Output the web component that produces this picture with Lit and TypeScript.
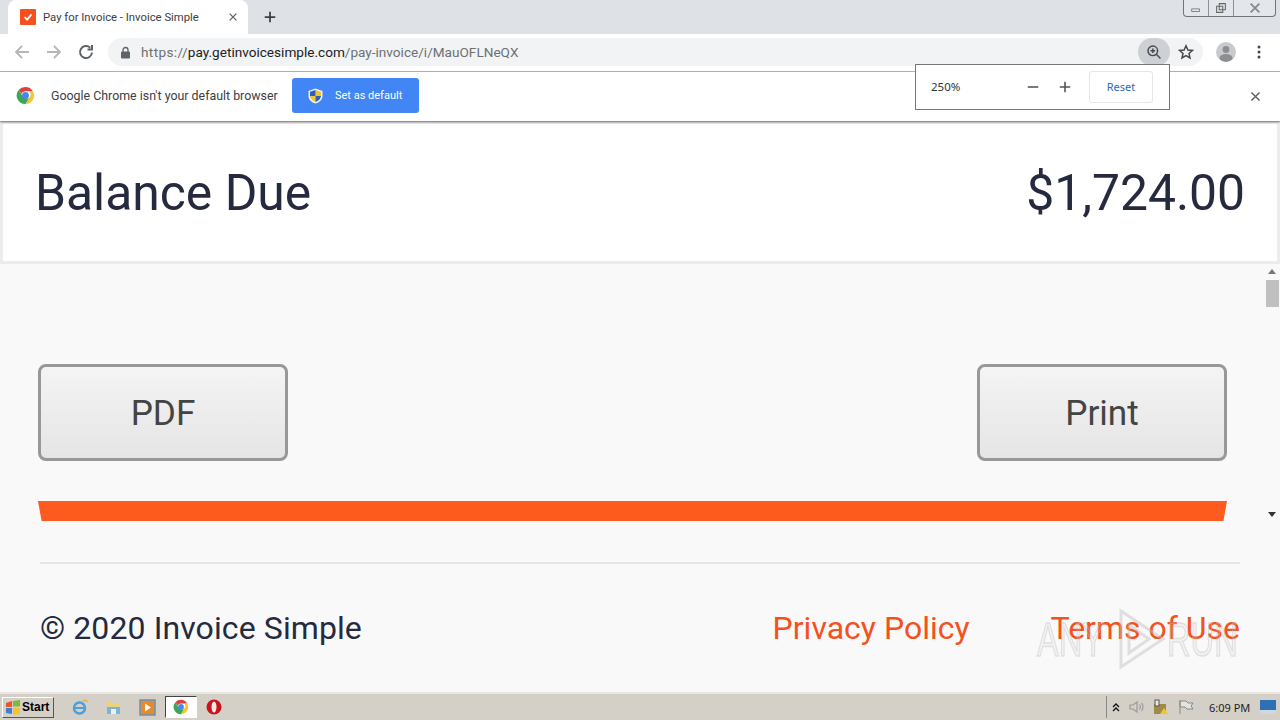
import { LitElement, html, css, svg } from "lit";
import { customElement } from "lit/decorators.js";

const chrome = (s: number) => html`<svg width=${s} height=${s} viewBox="0 0 20 20">
  <path d="M10 1a9 9 0 0 1 7.800 4.500H10a4.500 4.500 0 0 0-4.200 3L3 4A9 9 0 0 1 10 1z" fill="#e0403a"/>
  <path d="M17.800 5.500A9 9 0 0 1 10 19l3.900-6.700a4.500 4.500 0 0 0 0-6.800z" fill="#f7c52e"/>
  <path d="M10 19A9 9 0 0 1 3 4l3.900 6.700A4.500 4.500 0 0 0 13.900 12.300z" fill="#3aa757"/>
  <circle cx="10" cy="10" r="3.600" fill="#4a86e8"/></svg>`;

@customElement("app-root")
export class AppRoot extends LitElement {
  static styles = css`
    :host { display: block; width: 1280px; height: 720px; position: relative; overflow: hidden; font-family: Roboto, sans-serif; background: #f9f9f9; }
    * { box-sizing: border-box; }
    svg { display: block; flex: none; }
    .shell { display: flex; flex-direction: column; height: 720px; }
    .tabstrip { height: 34px; flex: none; background: #dee1e6; display: flex; padding-left: 8px; position: relative; }
    .tab { width: 240px; height: 34px; background: #fff; border-radius: 8px 8px 0 0; display: flex; align-items: center; padding: 0 0 0 12px; font: 11.3px Roboto, sans-serif; color: #3c4043; }
    .favicon { width: 16px; height: 16px; background: #f4511e; border-radius: 1px; display: flex; align-items: center; justify-content: center; margin-right: 7px; }
    .tab-title { flex: 1; white-space: nowrap; }
    .tab-x { margin-right: 9px; }
    .newtab { margin: 10px 0 0 15px; }
    .winctl { position: absolute; right: 4px; top: 0; width: 93px; height: 17px; border: 1px solid #70757c; border-top: none; border-radius: 0 0 4px 4px; background: #e3e6eb; display: flex; }
    .winctl div { display: flex; align-items: center; justify-content: center; border-right: 1px solid #8c9097; }
    .winctl div:last-child { border-right: none; }
    .w1 { width: 25px; } .w2 { width: 25px; } .w3 { flex: 1; }
    .toolbar { height: 38px; flex: none; background: #fff; border-bottom: 1px solid #b5b5b5; display: flex; align-items: center; padding: 0 0 1px 14px; }
    .nav { display: flex; gap: 16px; margin-right: 14px; }
    .omni { width: 1095px; height: 28px; border-radius: 14px; background: #f1f3f4; display: flex; align-items: center; padding-left: 12px; font: 13.6px Roboto, sans-serif; color: #6e7074; position: relative; }
    .omni svg.lock { margin-right: 10px; }
    .omni b { font-weight: 400; color: #202124; }
    .proto { letter-spacing: 0.35px; }
    .zoombtn { position: absolute; right: 33px; top: 0; width: 32px; height: 28px; border-radius: 14px; background: #cdd0d4; display: flex; align-items: center; justify-content: center; }
    .star { position: absolute; right: 2px; top: 0; width: 30px; height: 28px; display: flex; align-items: center; justify-content: center; }
    .tb-right { display: flex; align-items: center; margin-left: 13px; gap: 21px; }
    .avatar { width: 20px; height: 20px; border-radius: 50%; background: #c8cacd; overflow: hidden; }
    .infobar { height: 49px; flex: none; background: #fff; display: flex; align-items: center; padding: 0 0 2px 16px; font: 12.4px Roboto, sans-serif; color: #3c4043; position: relative; box-shadow: 0 1px 2px #666; z-index: 2; }
    .infotext { margin: 0 12px 0 16px; white-space: nowrap; width: 229px; }
    .setdefault { width: 127px; height: 35px; background: #4285f4; border-radius: 3px; color: #fff; display: flex; align-items: center; padding-left: 16px; gap: 12px; font-size: 11px; }
    .info-x { position: absolute; right: 18px; top: 18px; }
    .page { flex: 1; display: flex; flex-direction: column; background: #f9f9f9; }
    .balance { height: 143px; flex: none; background: #fff; border: 3px solid #ececec; display: flex; justify-content: space-between; align-items: center; padding: 0 32px 0 32px; font-size: 49.8px; color: #262a3e; }
    .actions { display: flex; justify-content: space-between; padding: 100px 53px 0 38px; }
    .btn { width: 250px; height: 97px; border: 3px solid #989898; border-radius: 8px; background: linear-gradient(#f4f4f4, #e5e5e5); color: #444; font-size: 35.2px; display: flex; align-items: center; justify-content: center; }
    .bar { height: 20px; margin: 40px 53px 0 38px; background: #ff5a1f; clip-path: polygon(0 0, 100% 0, 99.7% 100%, 0.3% 100%); }
    .rule { height: 2px; margin: 41px 40px 0 40px; background: #e6e6e6; }
    .foot { display: flex; align-items: center; padding: 45px 40px 0 40px; font-size: 32px; color: #262a3e; }
    .foot .c { flex: 1; letter-spacing: 0.1px; }
    .foot a { color: #f4511e; }
    .foot a + a { margin-left: 81px; }
    .scroll { position: absolute; left: 1264px; top: 265px; width: 16px; height: 257px; background: #f9f9f9; display: flex; flex-direction: column; align-items: center; justify-content: space-between; padding: 4px 0 5px; }
    .thumb { position: absolute; left: 2px; top: 15px; width: 13px; height: 27px; background: #c0c0c0; }
    .zoompop { position: absolute; left: 915px; top: 64px; width: 255px; height: 46px; background: #fff; border: 1px solid #777; z-index: 5; display: flex; align-items: center; padding: 0 0 1px 15px; font: 11.5px "Noto Sans", sans-serif; color: #333; }
    .zoompop .pct { width: 95px; }
    .zoompop .plus { margin-left: 18px; }
    .reset { width: 64px; height: 32px; margin-left: 17px; border: 1px solid #e4e6e8; border-radius: 3px; color: #2a6cc0; display: flex; align-items: center; justify-content: center; font-size: 11px; }
    .taskbar { height: 28px; flex: none; background: #d4d0c8; border-top: 2px solid #e9e7e2; display: flex; align-items: center; position: relative; }
    .start { width: 52px; height: 21px; margin-left: 2px; border: 1px solid; border-color: #fff #555 #555 #fff; background: #d4d0c8; display: flex; align-items: center; font: 700 12px "Liberation Sans", sans-serif; color: #000; padding-left: 2px; gap: 1px; }
    .quick { display: flex; align-items: center; gap: 17px; margin-left: 17px; }
    .quick .active { width: 32px; height: 22px; background: #fff; border: 1px solid; border-color: #444 #fff #fff #444; display: flex; align-items: center; justify-content: center; margin: 0 -8px; }
    .tray { position: absolute; left: 1106px; top: 2px; width: 174px; height: 22px; border-left: 1px solid #888; display: flex; align-items: center; padding-left: 5px; font: 11px "Noto Sans", sans-serif; color: #222; }
    .clock { position: absolute; left: 102px; }
    .mark { position: absolute; left: 1037px; top: 608px; width: 200px; height: 62px; z-index: 4; display: flex; align-items: center; font: 400 48px "Liberation Sans", sans-serif; color: rgba(200,200,200,.14); -webkit-text-stroke: 1.5px rgba(190,190,190,.4); pointer-events: none; filter: blur(.6px); }
    .mark span { display: inline-block; transform: scaleX(.68); transform-origin: 0 50%; white-space: nowrap; }
    .mark .any { width: 80px; }
    .mark .run { width: 66px; }
  `;

  render() {
    const gi = (d: string, c = "#5f6368", w = 2, s = 16, vb = 16) => html`<svg width=${s} height=${s} viewBox="0 0 ${vb} ${vb}" fill="none" stroke=${c} stroke-width=${w}>${svg`<path d=${d}/>`}</svg>`;
    return html`
      <div class="shell">
        <div class="tabstrip">
          <div class="tab">
            <span class="favicon">${gi("M4 8l3 3 5-6", "#fff", 2, 14, 16)}</span>
            <span class="tab-title">Pay for Invoice - Invoice Simple</span>
            <span class="tab-x">${gi("M3.500 3.500l9 9M12.500 3.500l-9 9", "#5f6368", 1.7, 12, 16)}</span>
          </div>
          <div class="newtab">${gi("M8 2v12M2 8h12", "#3c4043", 2, 14, 16)}</div>
          <div class="winctl">
            <div class="w1">${gi("M3 9h9v3H3z", "#777", 1, 14, 16)}</div>
            <div class="w2">${gi("M6 3h7v7H6zM3 6h7v7H3z", "#666", 1.2, 14, 16)}</div>
            <div class="w3">${gi("M3 3l10 10M13 3L3 13", "#888", 2, 14, 16)}</div>
          </div>
        </div>
        <div class="toolbar">
          <div class="nav">
            ${gi("M15 8H2M8 2L2 8l6 6", "#b4b6ba", 1.8, 16)}
            ${gi("M1 8h13M8 2l6 6-6 6", "#b4b6ba", 1.8, 16)}
            ${gi("M14 8.500a6 6 0 1 1-1.800-4.800M14 1v4.500H9.500", "#5f6368", 2, 16)}
          </div>
          <div class="omni">
            <svg class="lock" width="11" height="13" viewBox="0 0 11 13"><path d="M3 6V4a2.500 2.500 0 0 1 5 0v2" fill="none" stroke="#5f6368" stroke-width="1.300"/><rect x="1" y="5.500" width="9" height="7" rx="1" fill="#5f6368"/></svg>
            <span><span class="proto">https://</span><b>pay.getinvoicesimple.com</b>/pay-invoice/i/MauOFLNeQX</span>
            <div class="zoombtn"><svg width="16" height="16" viewBox="0 0 16 16" fill="none" stroke="#45484c" stroke-width="1.400"><circle cx="6.800" cy="6.800" r="4.800"/><path d="M10.300 10.300L14.500 14.500M4.500 6.800h4.600M6.800 4.500v4.600"/></svg></div>
            <div class="star"><svg width="16" height="16" viewBox="0 0 16 16" fill="none" stroke="#45484c" stroke-width="1.500"><path d="M8 1.800l1.900 4.200 4.500.4-3.400 3 1 4.500L8 11.600l-4 2.300 1-4.500-3.400-3 4.500-.4z"/></svg></div>
          </div>
          <div class="tb-right">
            <div class="avatar"><svg width="20" height="20" viewBox="0 0 20 20"><circle cx="10" cy="7.500" r="3.400" fill="#8b8e92"/><ellipse cx="10" cy="16" rx="6.500" ry="4" fill="#8b8e92"/></svg></div>
            <svg width="4" height="14" viewBox="0 0 4 14" fill="#45484c"><circle cx="2" cy="2" r="1.500"/><circle cx="2" cy="7" r="1.500"/><circle cx="2" cy="12" r="1.500"/></svg>
          </div>
        </div>
        <div class="infobar">
          ${chrome(19)}
          <span class="infotext">Google Chrome isn't your default browser</span>
          <div class="setdefault">
            <svg width="15" height="16" viewBox="0 0 15 16"><path d="M7.500.5L14.500 3v5c0 3.500-3 6.500-7 7.500C3.500 14.500.5 11.500.5 8V3z" fill="#eef2f8"/><path d="M7.500 2L13 3.800V8H7.500zM7.500 8H2c.3 2.800 2.500 5 5.500 6z" fill="#f4c430"/><path d="M7.500 2L2 3.800V8h5.500zM7.500 8H13c-.3 2.800-2.500 5-5.500 6z" fill="#2f5fb8"/></svg>
            <span>Set as default</span>
          </div>
          <div class="info-x">${gi("M3 3l10 10M13 3L3 13", "#5f6368", 1.8, 13, 16)}</div>
        </div>
        <div class="page">
          <div class="balance"><span>Balance Due</span><span>$1,724.00</span></div>
          <div class="actions"><div class="btn">PDF</div><div class="btn">Print</div></div>
          <div class="bar"></div>
          <div class="rule"></div>
          <div class="foot"><span class="c">© 2020 Invoice Simple</span><a>Privacy Policy</a><a>Terms of Use</a></div>
        </div>
        <div class="taskbar">
          <div class="start">
            <svg width="16" height="15" viewBox="0 0 16 15"><path d="M1 3l6-2v6H1z" fill="#e8562a"/><path d="M8 1l7-1v6.500H8z" fill="#7db93a"/><path d="M1 8h6v6l-6-1z" fill="#3f7fd1"/><path d="M8 8h7v6l-7 1z" fill="#f4c430"/></svg>
            Start
          </div>
          <div class="quick">
            <svg width="17" height="17" viewBox="0 0 17 17" fill="none"><circle cx="8.500" cy="9" r="5.500" stroke="#4aa0d8" stroke-width="2.500"/><path d="M3 9h11" stroke="#4aa0d8" stroke-width="2"/><path d="M12 2c2-1 4-1 4 1" stroke="#e8b030" stroke-width="1.500"/></svg>
            <svg width="17" height="16" viewBox="0 0 17 16"><path d="M2 3h5l1 2h7v4H2z" fill="#ecd27a"/><path d="M2 8h13v7H2z" fill="#7cb4d8"/><path d="M6 10h5v5H6z" fill="#e8f0f4"/></svg>
            <svg width="17" height="17" viewBox="0 0 17 17"><rect x="1" y="1" width="15" height="15" fill="#e88a2a" stroke="#5f94c4" stroke-width="1.500"/><path d="M6 4.500v8l6-4z" fill="#fff"/></svg>
            <div class="active">${chrome(16)}</div>
            <svg width="16" height="16" viewBox="0 0 16 16"><ellipse cx="8" cy="8" rx="7.500" ry="7.500" fill="#c8141c"/><ellipse cx="8" cy="8" rx="2.500" ry="5.500" fill="#f6e8e8"/></svg>
          </div>
          <div class="tray">
            <svg width="8" height="9" viewBox="0 0 8 9" fill="none" stroke="#111" stroke-width="1.300"><path d="M1 4l3-3 3 3M1 8l3-3 3 3"/></svg>
            <svg style="margin-left:9px" width="16" height="16" viewBox="0 0 16 16" fill="none" stroke="#9a9a9a" stroke-width="1.200"><path d="M1 6h3l4-3v10l-4-3H1zM10.500 5.500c1 1.500 1 3.500 0 5M12.500 4c2 2 2 6 0 8"/></svg>
            <svg style="margin-left:8px" width="16" height="16" viewBox="0 0 16 16"><rect x="1" y="5" width="12" height="10" fill="#a08a4a"/><rect x="2" y="1" width="4" height="6" fill="#e8e8e8" stroke="#555"/><path d="M11 9l4 6H7z" fill="#f4c430"/></svg>
            <svg style="margin-left:9px" width="16" height="16" viewBox="0 0 16 16" fill="#e4e4e0" stroke="#888"><path d="M2 1v14M2 2h6l2 2h5l-2 3 2 3H9L7 8H2z"/></svg>
            <span class="clock">6:09 PM</span>
            <svg style="position:absolute;left:153px;top:4px" width="16" height="14" viewBox="0 0 16 14"><rect width="16" height="14" fill="#2f6fb5"/><rect y="10" width="16" height="4" fill="#cfd8e0"/></svg>
          </div>
        </div>
      </div>
      <div class="zoompop">
        <span class="pct">250%</span>
        ${gi("M2 8h12", "#555", 1.8, 14, 16)}
        <span class="plus">${gi("M8 2v12M2 8h12", "#555", 1.8, 14, 16)}</span>
        <div class="reset">Reset</div>
      </div>
      <div class="scroll">
        <svg width="8" height="5" viewBox="0 0 8 5"><path d="M4 0l4 5H0z" fill="#777"/></svg>
        <div class="thumb"></div>
        <svg width="8" height="5" viewBox="0 0 8 5"><path d="M0 0h8L4 5z" fill="#333"/></svg>
      </div>
      <div class="mark"><span class="any">ANY</span><svg width="50" height="62" viewBox="0 0 50 62" fill="none" stroke="rgba(190,190,190,.45)" stroke-width="3"><path d="M4 3l42 28L4 59z"/><path d="M12 17l20 14-20 14z"/></svg><span class="run">RUN</span></div>
    `;
  }
}
